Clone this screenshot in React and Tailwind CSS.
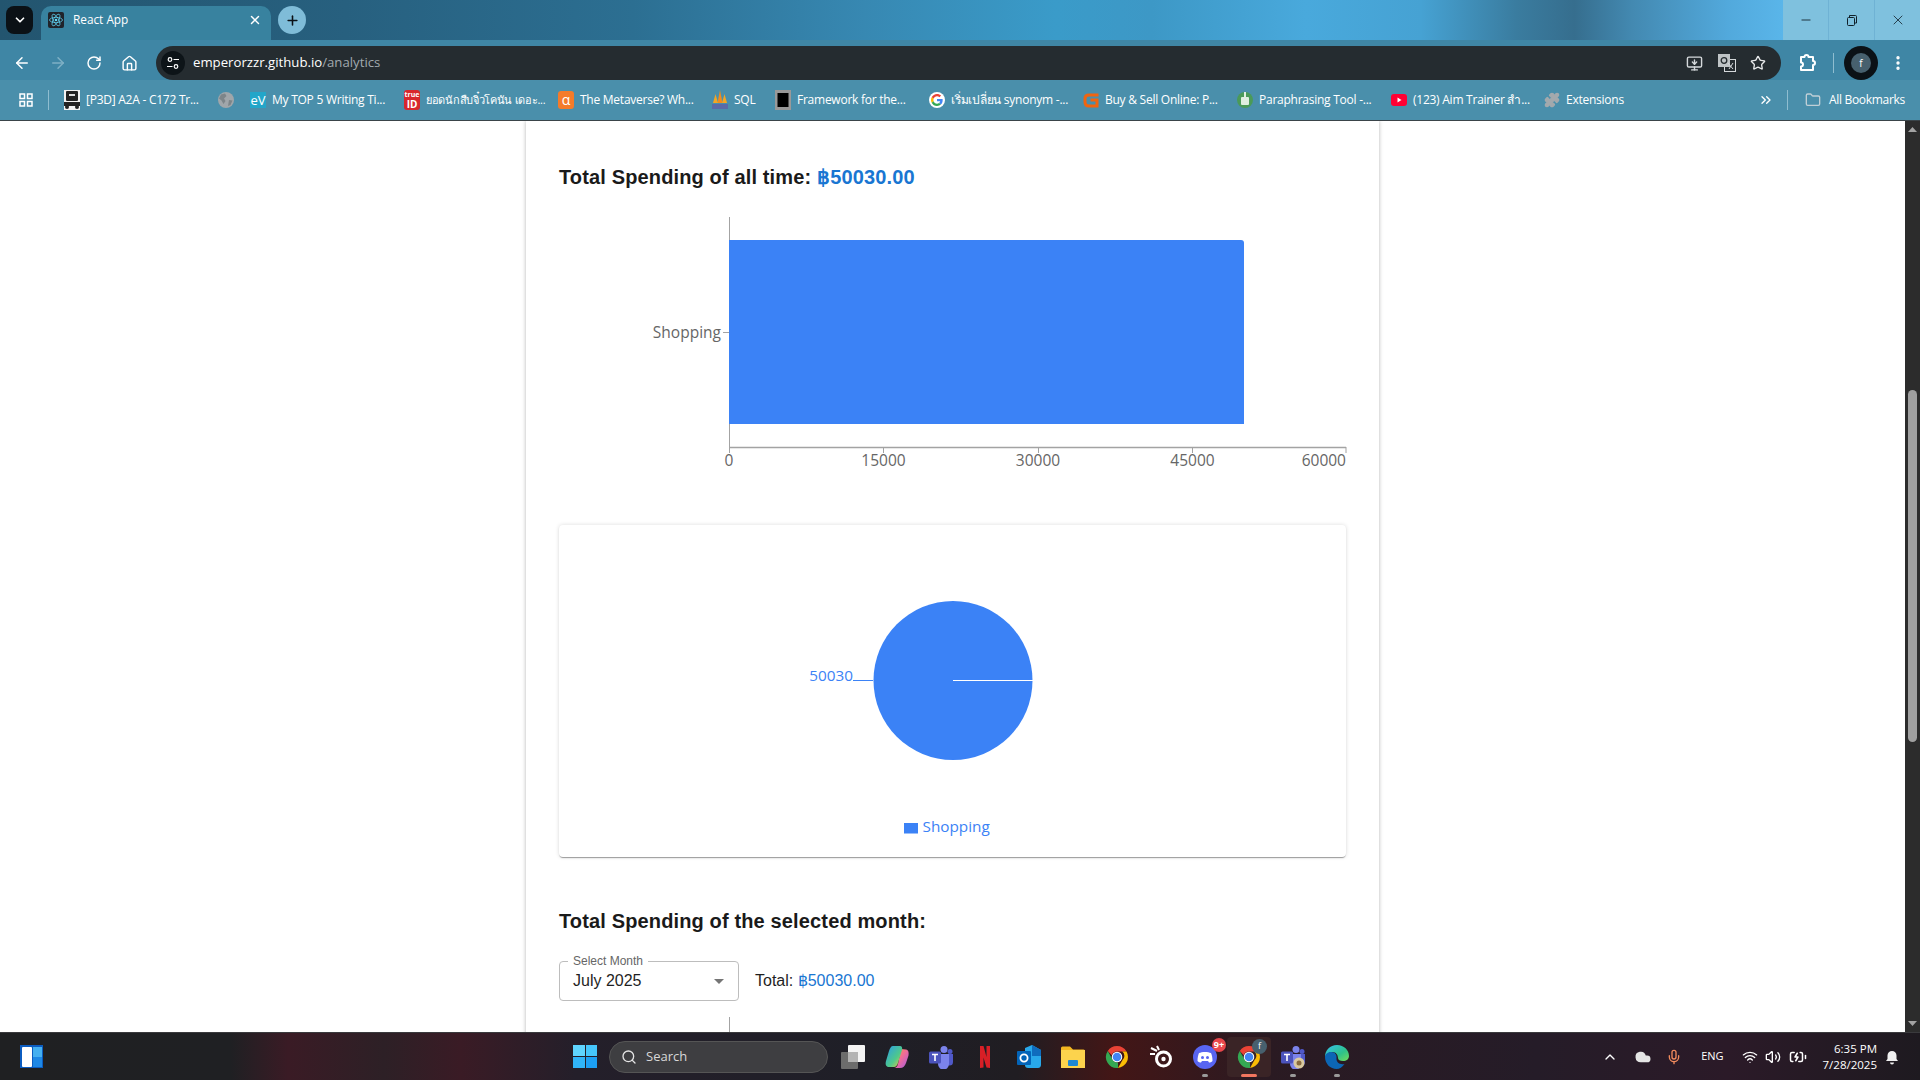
import React from "react";
import { ArrowLeft, ArrowRight, RotateCw, Home, Star, Puzzle, X, Minus, Plus, ChevronDown, ChevronUp, ChevronsRight, Folder, EllipsisVertical, MonitorDown, Search, Mic, Wifi, Volume2, BatteryCharging, Cloud } from "lucide-react";

const ui = "font-['Open_Sans','Noto_Sans','Noto_Sans_CJK_SC',sans-serif]";

function ReactIcon() {
  return (
    <svg width="16" height="16" viewBox="0 0 16 16">
      <rect width="16" height="16" rx="2" fill="#20232a" />
      <g fill="none" stroke="#61dafb" strokeWidth="0.7">
        <ellipse cx="8" cy="8" rx="6.5" ry="2.6" />
        <ellipse cx="8" cy="8" rx="6.5" ry="2.6" transform="rotate(60 8 8)" />
        <ellipse cx="8" cy="8" rx="6.5" ry="2.6" transform="rotate(120 8 8)" />
      </g>
      <circle cx="8" cy="8" r="1.3" fill="#61dafb" />
    </svg>
  );
}

const Ic = {
  p3d: (
    <svg width="16" height="20" viewBox="0 0 16 20">
      <rect width="16" height="20" fill="#f2f2f2" />
      <rect x="2" y="1" width="12" height="10" rx="1" fill="#222" />
      <rect x="0" y="12" width="16" height="4" fill="#222" />
      <circle cx="3" cy="17" r="2" fill="#222" /><circle cx="13" cy="17" r="2" fill="#222" />
      <rect x="5" y="4" width="6" height="2" fill="#ddd" />
    </svg>
  ),
  globe: (
    <svg width="16" height="16" viewBox="0 0 16 16">
      <circle cx="8" cy="8" r="8" fill="#a0a6aa" />
      <path d="M3 2.500L7 1.500L8.500 4L6 6.500L7.500 9L5.500 12L3.500 8.500L1 6.500ZM11 8L14.500 8.500L12.500 13L10 14Z" fill="#7d8589" />
    </svg>
  ),
  ev: (
    <span className="flex h-[16px] w-[16px] items-center justify-center bg-[#23a6c9] text-[13px] leading-none text-white">eV</span>
  ),
  trueid: (
    <span className="flex h-[20px] w-[16px] flex-col items-center justify-center rounded-[3px] bg-[#d8262c] text-[7px] font-bold leading-[8px] text-white">true<span className="text-[10px] leading-[10px]">ID</span></span>
  ),
  alpha: (
    <span className="flex h-[18px] w-[16px] items-center justify-center rounded-[3px] bg-[#f47b2a] text-[14px] leading-none text-white">α</span>
  ),
  pea: (
    <svg width="16" height="20" viewBox="0 0 16 20">
      <path d="M8 0 L10.500 13 L5.500 13Z" fill="#f28c1e" /><path d="M3.500 4 L6 13 L1 13Z" fill="#f5a623" /><path d="M12.500 4 L15 13 L10 13Z" fill="#f5a623" />
      <rect x="0" y="14" width="16" height="5" fill="#5a6aa8" />
    </svg>
  ),
  frame: (
    <svg width="16" height="20" viewBox="0 0 16 20">
      <rect width="16" height="20" fill="#999" /><rect x="2.5" y="3" width="11" height="14" fill="#000" />
    </svg>
  ),
  google: (
    <svg width="16" height="16" viewBox="0 0 48 48">
      <circle cx="24" cy="24" r="24" fill="#fff" />
      <path fill="#EA4335" d="M24 13c3 0 5.4 1 7.3 2.8l5-5C33.200 8 29 6 24 6 17 6 11 10 8 16l5.900 4.500C15.300 16 19.300 13 24 13z" />
      <path fill="#4285F4" d="M41 24.500c0-1.300-.1-2.500-.3-3.500H24v7h9.600c-.4 2.200-1.700 4-3.600 5.300l5.700 4.400C39 34.500 41 30 41 24.500z" />
      <path fill="#FBBC05" d="M13.900 27.500c-.4-1.100-.6-2.300-.6-3.500s.2-2.400.6-3.500L8 16c-1.300 2.500-2 5.200-2 8s.7 5.500 2 8z" />
      <path fill="#34A853" d="M24 42c5 0 9-1.600 11.700-4.300L30 33.300c-1.500 1-3.500 1.700-6 1.700-4.700 0-8.700-3-10.100-7.500L8 32c3 6 9 10 16 10z" />
    </svg>
  ),
  gorange: (
    <svg width="16" height="16" viewBox="0 0 16 16">
      <path d="M15.500 3H6Q2 3 2 6.500V10Q2 14 6 14H14V8H7.500" fill="none" stroke="#f0640f" strokeWidth="3" />
    </svg>
  ),
  para: (
    <svg width="16" height="20" viewBox="0 0 16 20">
      <circle cx="8" cy="10" r="8" fill="#4a9a58" /><rect x="4" y="7" width="8" height="8" rx="1" fill="#dfeee0" /><rect x="7" y="2" width="2" height="5" fill="#dfeee0" />
    </svg>
  ),
  yt: (
    <svg width="16" height="12" viewBox="0 0 16 12"><rect width="16" height="12" rx="3" fill="#ff0033" /><path d="M6.500 3.500L10.500 6L6.500 8.500Z" fill="#fff" /></svg>
  ),
};

const bookmarks = [
  { w: "w-[154px]", icon: Ic.p3d, text: "[P3D] A2A - C172 Tr..." },
  { w: "w-[32px]", icon: Ic.globe, text: "" },
  { w: "w-[154px]", icon: Ic.ev, text: "My TOP 5 Writing Ti..." },
  { w: "w-[154px]", icon: Ic.trueid, text: "ยอดนักสืบจิ๋วโคนัน เดอะ...", thai: true },
  { w: "w-[154px]", icon: Ic.alpha, text: "The Metaverse? Wh..." },
  { w: "w-[63px]", icon: Ic.pea, text: "SQL" },
  { w: "w-[154px]", icon: Ic.frame, text: "Framework for the..." },
  { w: "w-[154px]", icon: Ic.google, text: "เริ่มเปลี่ยน synonym -..." },
  { w: "w-[154px]", icon: Ic.gorange, text: "Buy & Sell Online: P..." },
  { w: "w-[154px]", icon: Ic.para, text: "Paraphrasing Tool -..." },
  { w: "w-[153px]", icon: Ic.yt, text: "(123) Aim Trainer สำ..." },
  { w: "w-[90px]", icon: <Puzzle size={16} fill="#a3a9ad" className="text-[#a3a9ad]" />, text: "Extensions" },
];

function ChromeIcon() {
  return (
    <svg width="24" height="24" viewBox="0 0 48 48">
      <path d="M24 2a22 22 0 0 1 19 11H24a11 11 0 0 0-10.500 7.500L5.500 12A22 22 0 0 1 24 2z" fill="#ea4335" />
      <path d="M43 13A22 22 0 0 1 26 45.900L35 30a11 11 0 0 0 -.5-17z" fill="#fbbc05" />
      <path d="M5.500 12l9.500 17a11 11 0 0 0 11 6L26 45.900A22 22 0 0 1 5.500 12z" fill="#34a853" />
      <circle cx="24" cy="24" r="10.500" fill="#fff" /><circle cx="24" cy="24" r="8.500" fill="#4285f4" />
    </svg>
  );
}

function TeamsIcon({ badge }) {
  return (
    <svg width="24" height="24" viewBox="0 0 24 24">
      <circle cx="15" cy="4.500" r="3.500" fill="#7b83eb" /><circle cx="21" cy="6.500" r="2.500" fill="#5059c9" />
      <path d="M17 9h7v8a3.500 3.500 0 0 1-7 0z" fill="#5059c9" />
      <path d="M9 9h11v10a5.500 5.500 0 0 1-11 0z" fill="#7b83eb" />
      <rect x="0" y="6.500" width="12" height="12" rx="1.500" fill="#4b53bc" />
      <path d="M3 9.500h6M6 9.500v6.500" stroke="#fff" strokeWidth="1.600" fill="none" />
      {badge && <circle cx="18" cy="18" r="5.500" fill="#d9c9a0" />}
      {badge && <circle cx="18" cy="18" r="2.500" fill="#8a6c3e" />}
    </svg>
  );
}

const taskIcons = [
  <svg width="24" height="24" viewBox="0 0 24 24"><rect x="0" y="7" width="17" height="17" rx="1" fill="#6c6c6c" /><rect x="7" y="0" width="17" height="17" rx="1" fill="#f4f4f4" /><rect x="7" y="7" width="10" height="10" fill="#b4b4b4" /></svg>,
  <svg width="24" height="24" viewBox="0 0 24 24"><defs><linearGradient id="copa" x1="0" y1="0" x2="1" y2="1"><stop offset="0" stopColor="#2a9de8" /><stop offset="0.6" stopColor="#4fc98a" /><stop offset="1" stopColor="#f6c445" /></linearGradient><linearGradient id="copb" x1="0" y1="0" x2="1" y2="1"><stop offset="0" stopColor="#f6a045" /><stop offset="0.5" stopColor="#ee6a9a" /><stop offset="1" stopColor="#a35be0" /></linearGradient></defs><path d="M16 4l5 .5c2.500.5 3 3 2.500 6L21 18c-1 3-3 5-6 5H9c2 0 3.500-2 4-4z" fill="url(#copb)" /><path d="M8 1h7c2 0 2.500 2 2 4l-4 13c-.5 2-2 4-4 4H4c-3 0-4-2.500-3-6L4 6c1-3 2-5 4-5z" fill="url(#copa)" /></svg>,
  <TeamsIcon />,
  <svg width="24" height="24" viewBox="0 0 24 24"><path d="M7 1h3.500l3 11V1H17v22l-3.500-.6-3-10V22.500L7 23z" fill="#d81f26" /></svg>,
  <svg width="24" height="24" viewBox="0 0 24 24"><path d="M8 3l7-3 9 5v15c0 1.500-1 3-3 3H11c-2 0-3-1-3-3z" fill="#28a8ea" /><path d="M15 0l9 5v6h-9z" fill="#0f6cbd" /><rect x="0" y="6" width="14" height="14" rx="1" fill="#0364b8" /><circle cx="7" cy="13" r="3.600" fill="none" stroke="#fff" strokeWidth="1.800" /></svg>,
  <svg width="24" height="24" viewBox="0 0 24 24"><path d="M0 3a1.500 1.500 0 0 1 1.500-1.500H9l3 3h10.500A1.500 1.500 0 0 1 24 6v16.500H0z" fill="#f2b721" /><rect x="0" y="5" width="24" height="18" fill="#fcd34d" /><rect x="7" y="15" width="10" height="6" rx="1" fill="#1e88d2" /></svg>,
  <ChromeIcon />,
  <svg width="24" height="24" viewBox="0 0 24 24"><circle cx="14.500" cy="14" r="7" fill="none" stroke="#fff" strokeWidth="3" /><circle cx="14.500" cy="14" r="2.200" fill="#fff" /><path d="M8 6L2 3M10 5L8 1M6 9L1 9" stroke="#fff" strokeWidth="2" /></svg>,
  <svg width="24" height="24" viewBox="0 0 24 24"><circle cx="12" cy="12" r="12" fill="#5865f2" /><path d="M6 8c3-1.500 9-1.500 12 0 1 2 1.500 5 1.500 8-1 1-2.500 1.500-3.500 1.500l-1-1.500h-6l-1 1.500c-1 0-2.500-.5-3.500-1.500 0-3 .5-6 1.500-8z" fill="#fff" /><circle cx="9.500" cy="12.500" r="1.500" fill="#5865f2" /><circle cx="14.500" cy="12.500" r="1.500" fill="#5865f2" /></svg>,
  <ChromeIcon />,
  <TeamsIcon badge />,
  <svg width="24" height="24" viewBox="0 0 24 24"><defs><linearGradient id="edg" x1="0" y1="0" x2="1" y2="1"><stop offset="0" stopColor="#35c1f1" /><stop offset="0.6" stopColor="#2ec28a" /><stop offset="1" stopColor="#74dd5a" /></linearGradient></defs><path d="M12 0c7 0 12 5 12 11 0 3-2.500 5-6 5-3 0-5-1-5-3 0-3-2-6-5.500-6C4 7 1.500 9 0 12 0 5 5 0 12 0z" fill="url(#edg)" /><path d="M0 12c0-3 3-5 6.500-5 3.500 0 5.500 3 5 6-.5 4 3 7 8 6-2 3-5 5-8 5-6 0-11.500-5-11.500-12z" fill="#0c66b5" /></svg>,
];

export default function App() {
  return (
    <div className={`flex h-screen w-full flex-col overflow-hidden bg-white ${ui}`}>
      {/* title bar */}
      <div className="flex h-[40px] shrink-0 bg-[linear-gradient(90deg,#23556f_0%,#27607f_18%,#2c6f92_33%,#3788b2_45%,#3a9bc9_55%,#3d98c6_60%,#49a9dc_68%,#46a2d3_74%,#3a7c9f_79%,#366e8e_82%,#4389b1_85%,#52a9dc_90%,#5ab6ea_93%)]">
        <div className="ml-[6px] mt-[6px] flex h-[28px] w-[27px] items-center justify-center rounded-[8px] bg-[#0b1116] text-white">
          <ChevronDown size={14} strokeWidth={3} />
        </div>
        <div className="ml-[8px] mt-[6px] flex h-[34px] w-[230px] items-center rounded-t-[10px] bg-[#38829f] pb-[6px] pl-[7px] pr-[9px]">
          <ReactIcon />
          <span className="ml-[9px] flex-1 text-[11.800px] text-white">React App</span>
          <X size={14} strokeWidth={2.5} className="text-white" />
        </div>
        <div className="ml-[7px] mt-[6px] flex h-[28px] w-[28px] items-center justify-center rounded-full bg-[#7fbcd8] text-[#0b1116]">
          <Plus size={15} strokeWidth={2.5} />
        </div>
        <div className="flex-1" />
        <div className="flex h-[40px] w-[137px] bg-[#7fc1de] text-[#10202a]">
          <div className="flex w-[46px] items-center justify-center border-r border-[#6fb2d4]"><Minus size={14} strokeWidth={1.5} /></div>
          <div className="flex w-[46px] items-center justify-center border-r border-[#6fb2d4]">
            <svg width="12" height="12" viewBox="0 0 12 12" fill="none" stroke="#10202a"><rect x="1.500" y="3.500" width="7" height="8" rx="1" /><path d="M3.500 3V1.500h6a1 1 0 0 1 1 1V9H9" /></svg>
          </div>
          <div className="flex flex-1 items-center justify-center"><X size={16} strokeWidth={1.2} /></div>
        </div>
      </div>

      {/* toolbar */}
      <div className="flex h-[40px] shrink-0 items-center bg-[#3f86a5] pt-[6px] text-white">
        <div className="flex w-[156px] items-center pl-[13px]">
          <ArrowLeft size={18} strokeWidth={2} />
          <ArrowRight size={18} strokeWidth={2} className="ml-[18px] text-[#7fb0c5]" />
          <RotateCw size={16} strokeWidth={2.2} className="ml-[19px]" />
          <Home size={17} strokeWidth={2} className="ml-[19px]" />
        </div>
        <div className="flex h-[34px] w-[1625px] items-center rounded-full bg-[#252c30] pl-[5px] pr-[15px]">
          <div className="flex h-[24px] w-[24px] items-center justify-center rounded-full bg-[#0d1418]">
            <svg width="14" height="14" viewBox="0 0 14 14" fill="none" stroke="#fff" strokeWidth="1.200"><circle cx="4" cy="3.500" r="1.800" /><path d="M7.500 3.500H13M1 10.500H6.500" /><circle cx="10" cy="10.500" r="1.800" /></svg>
          </div>
          <span className="ml-[8px] flex-1 text-[13.200px] text-white">emperorzzr.github.io<span className="text-[#a1a9ad]">/analytics</span></span>
          <MonitorDown size={17} className="text-[#d5d9db]" />
          <svg width="18" height="18" viewBox="0 0 18 18" className="ml-[15px]">
            <rect x="6.500" y="5.500" width="11" height="12" fill="#252c30" stroke="#d5d9db" />
            <rect x="0.500" y="0.500" width="11" height="12" fill="#bfc4c6" stroke="#bfc4c6" />
            <circle cx="6" cy="6.500" r="2.800" fill="none" stroke="#252c30" strokeWidth="1.300" />
            <path d="M10 9L15 15M15 9L11 15" stroke="#d5d9db" fill="none" />
          </svg>
          <Star size={16} strokeWidth={2} className="ml-[14px] text-[#e8eaeb]" />
        </div>
        <svg width="18" height="18" viewBox="0 0 18 18" fill="none" stroke="#fff" strokeWidth="2" strokeLinejoin="round" className="ml-[18px]">
          <path d="M2 3h3.500a2 2 0 0 1 4 0H14v4a2 2 0 0 1 0 4v5H2v-3.500a2 2 0 0 0 0-4z" />
        </svg>
        <div className="ml-[16px] h-[20px] w-px bg-[#8fbdd0]" />
        <div className="ml-[10px] flex h-[34px] w-[34px] items-center justify-center rounded-full bg-[#0b1116]">
          <div className="flex h-[20px] w-[20px] items-center justify-center rounded-full bg-[#47606e] text-[10px] text-white">f</div>
        </div>
        <EllipsisVertical size={18} strokeWidth={2.5} className="ml-[11px]" />
      </div>

      {/* bookmarks */}
      <div className="flex h-[41px] shrink-0 items-center border-b border-[#3a4449] bg-[#4a8fab] text-[12px] text-white">
        <div className="flex w-[49px] items-center justify-between pl-[19px]">
          <svg width="14" height="14" viewBox="0 0 14 14" fill="none" stroke="#fff" strokeWidth="1.500"><rect x="1" y="1" width="4.500" height="4.500" /><rect x="8.500" y="1" width="4.500" height="4.500" /><rect x="1" y="8.500" width="4.500" height="4.500" /><rect x="8.500" y="8.500" width="4.500" height="4.500" /></svg>
          <div className="h-[20px] w-px bg-[#8fbdd0]" />
        </div>
        <div className="ml-[15px] flex items-center">
          {bookmarks.map((b, i) => (
            <div key={i} className={`flex items-center ${b.w}`}>
              <span className="flex w-[16px] shrink-0 items-center justify-center">{b.icon}</span>
              {b.text && <span className={`ml-[6px] whitespace-nowrap ${b.thai ? "text-[11px] tracking-[-0.3px]" : "tracking-[-0.25px]"}`}>{b.text}</span>}
            </div>
          ))}
        </div>
        <div className="flex-1" />
        <ChevronsRight size={16} className="mr-[13px]" />
        <div className="h-[20px] w-px bg-[#8fbdd0]" />
        <Folder size={16} className="ml-[17px] text-[#c0cfd6]" />
        <span className="ml-[8px] mr-[15px] tracking-[-0.3px]">All Bookmarks</span>
      </div>

      {/* page */}
      <div className="flex min-h-0 flex-1">
        <div className="flex min-w-0 flex-1 justify-center overflow-hidden">
          <div className="h-[1000px] w-[853px] shrink-0 bg-white px-[33px] pt-[43px] shadow-[0_0_4px_rgba(0,0,0,0.3)]">
            <h2 className="whitespace-nowrap font-['Liberation_Sans',sans-serif] text-[20px] font-bold leading-[26px] tracking-[0.14px] text-[#1a1a1a]">
              Total Spending of all time: <span className="text-[#1976d2]">฿50030.00</span>
            </h2>
            <svg width="788" height="272" viewBox="559 204 788 272" className="mt-[14px] block">
              <g stroke="#a3a3a3" strokeWidth="1" fill="none">
                <path d="M729.500 217V447.500" />
                <path d="M723 332.500H729" />
              </g>
              <path d="M729 240H1241q3 0 3 3V424H729z" fill="#3b82f6" />
              <g stroke="#a3a3a3" fill="none">
                <path d="M729 447.500H1346" strokeWidth="1.500" />
                <path d="M729.500 447V453M883.500 447V453M1038.500 447V453M1192.500 447V453M1346 447V453" />
              </g>
              <g fill="#666" fontSize="15.500" fontFamily="'Open Sans',sans-serif">
                <text x="721" y="338" textAnchor="end">Shopping</text>
                <text x="729" y="466" textAnchor="middle">0</text>
                <text x="883.500" y="466" textAnchor="middle">15000</text>
                <text x="1038" y="466" textAnchor="middle">30000</text>
                <text x="1192.500" y="466" textAnchor="middle">45000</text>
                <text x="1346" y="466" textAnchor="end">60000</text>
              </g>
            </svg>
            <div className="mt-[49px] flex h-[332px] flex-col items-center rounded-[4px] bg-white shadow-[0_2px_1px_-1px_rgba(0,0,0,0.25),0_1px_1px_0_rgba(0,0,0,0.14),0_0_4px_0_rgba(0,0,0,0.14)]">
              <svg width="788" height="332" viewBox="559 525 788 332" className="block">
                <circle cx="953" cy="680.500" r="79.500" fill="#3b82f6" />
                <path d="M953 680.500H1033" stroke="#fff" strokeWidth="1" />
                <path d="M853 680.500H873" stroke="#3b82f6" strokeWidth="1" />
                <g fill="#3b82f6" fontSize="15.300" fontFamily="'Open Sans',sans-serif">
                  <text x="853" y="681" textAnchor="end">50030</text>
                  <rect x="904" y="823" width="14" height="10.500" />
                  <text x="922.500" y="832">Shopping</text>
                </g>
              </svg>
            </div>
            <h2 className="mt-[51px] whitespace-nowrap font-['Liberation_Sans',sans-serif] text-[20px] font-bold leading-[26px] tracking-[0.14px] text-[#1a1a1a]">
              Total Spending of the selected month:
            </h2>
            <div className="mt-[27px] flex items-center font-['Liberation_Sans',sans-serif]">
              <div className="relative flex h-[40px] w-[180px] items-center rounded-[4px] border border-[#bdbdbd] pl-[13px] pr-[14px] text-[16px] text-[#1f1f1f]">
                <span className="absolute left-[8px] top-[-8px] bg-white px-[5px] text-[12px] leading-[14px] text-[#666]">Select Month</span>
                <span className="flex-1">July 2025</span>
                <svg width="10" height="5" viewBox="0 0 10 5"><path d="M0 0H10L5 5Z" fill="#757575" /></svg>
              </div>
              <p className="ml-[16px] text-[16px] text-[#1f1f1f]">Total: <span className="text-[#1976d2]">฿50030.00</span></p>
            </div>
            <div className="ml-[169.500px] mt-[16px] h-[40px] w-px bg-[#a3a3a3]" />
          </div>
        </div>
        {/* scrollbar */}
        <div className="flex w-[15px] shrink-0 flex-col items-center bg-[#2c2c2c]">
          <svg width="9" height="5" viewBox="0 0 9 5" className="mt-[6px] shrink-0"><path d="M4.500 0L9 5H0Z" fill="#a3a3a3" /></svg>
          <div className="mt-[258px] h-[352px] w-[9px] shrink-0 rounded-full bg-[#a0a0a0]" />
          <div className="flex-1" />
          <svg width="9" height="5" viewBox="0 0 9 5" className="mb-[6px] shrink-0"><path d="M0 0H9L4.500 5Z" fill="#a3a3a3" /></svg>
        </div>
      </div>

      {/* taskbar */}
      <div className="flex h-[48px] shrink-0 items-center border-t border-[#3a3a3d] bg-[linear-gradient(90deg,#1f2022_0%,#1f2023_12%,#3a1b25_15%,#2d2026_20%,#3a1b25_24%,#241f2a_30%,#1f1f27_45%,#201d22_53%,#431616_58%,#2a1a22_66%,#251c28_80%,#2b1a28_90%,#1e1a20_100%)] text-white">
        <div className="ml-[20px] flex h-[23px] w-[23px] gap-[1px] bg-[#0b5cc0] p-[1.500px]">
          <div className="w-[10px] rounded-[1px] bg-white" />
          <div className="flex flex-1 flex-col bg-[#45b0f0]"><div className="flex-1" /><div className="h-[10px] bg-[#1e88e5]" /></div>
        </div>
        <div className="ml-[530px] grid h-[23px] w-[24px] shrink-0 grid-cols-2 grid-rows-2 gap-[1px]">
          <div className="bg-[#5fd5ff]" /><div className="bg-[#45c6fb]" /><div className="bg-[#30b4f8]" /><div className="bg-[#1c9ff3]" />
        </div>
        <div className="ml-[12px] flex h-[32px] w-[219px] items-center rounded-full border border-[#555] bg-[#3e3e41] pl-[11px]">
          <Search size={16} strokeWidth={2} className="text-[#e4e4e4]" />
          <span className="ml-[9px] text-[13px] text-[#d8d8d8]">Search</span>
        </div>
        <div className="ml-[3px] flex">
          {taskIcons.map((icon, i) => (
            <div key={i} className={`relative flex h-[40px] w-[44px] items-center justify-center rounded-[4px] ${i === 9 ? "bg-[#3a2426]" : ""}`}>
              {icon}
              {i === 8 && <span className="absolute right-[1px] top-[1px] flex h-[14px] w-[14px] items-center justify-center rounded-full bg-[#e8474c] text-[9px] font-bold text-white">9+</span>}
              {i === 9 && <span className="absolute right-[4px] top-[2px] flex h-[15px] w-[15px] items-center justify-center rounded-full bg-[#47606e] text-[9px] text-white">f</span>}
              {(i === 8 || i === 10 || i === 11) && <span className="absolute bottom-0 h-[3px] w-[6px] rounded-full bg-[#9a9a9a]" />}
              {i === 9 && <span className="absolute bottom-0 h-[3px] w-[16px] rounded-full bg-[#f2765f]" />}
            </div>
          ))}
        </div>
        <div className="flex-1" />
        <ChevronUp size={16} strokeWidth={2} />
        <Cloud size={18} fill="#e5e5e5" strokeWidth={0} className="ml-[16px]" />
        <Mic size={16} className="ml-[14px] text-[#f08a5d]" />
        <span className="ml-[19px] text-[11px]">ENG</span>
        <Wifi size={16} className="ml-[18px]" />
        <Volume2 size={16} className="ml-[7px]" />
        <BatteryCharging size={18} className="ml-[8px]" />
        <div className="ml-[16px] flex flex-col items-end text-[11.500px] leading-[16px]">
          <span>6:35 PM</span>
          <span>7/28/2025</span>
        </div>
        <svg width="16" height="16" viewBox="0 0 16 16" className="ml-[7px] mr-[20px]"><path d="M8 2a4.500 4.500 0 0 1 4.500 4.500V10l1.500 2H2l1.500-2V6.500A4.500 4.500 0 0 1 8 2z" fill="#f0f0f0" /><path d="M6 13.500h4a2 2 0 0 1-4 0z" fill="#f0f0f0" /></svg>
      </div>
    </div>
  );
}
